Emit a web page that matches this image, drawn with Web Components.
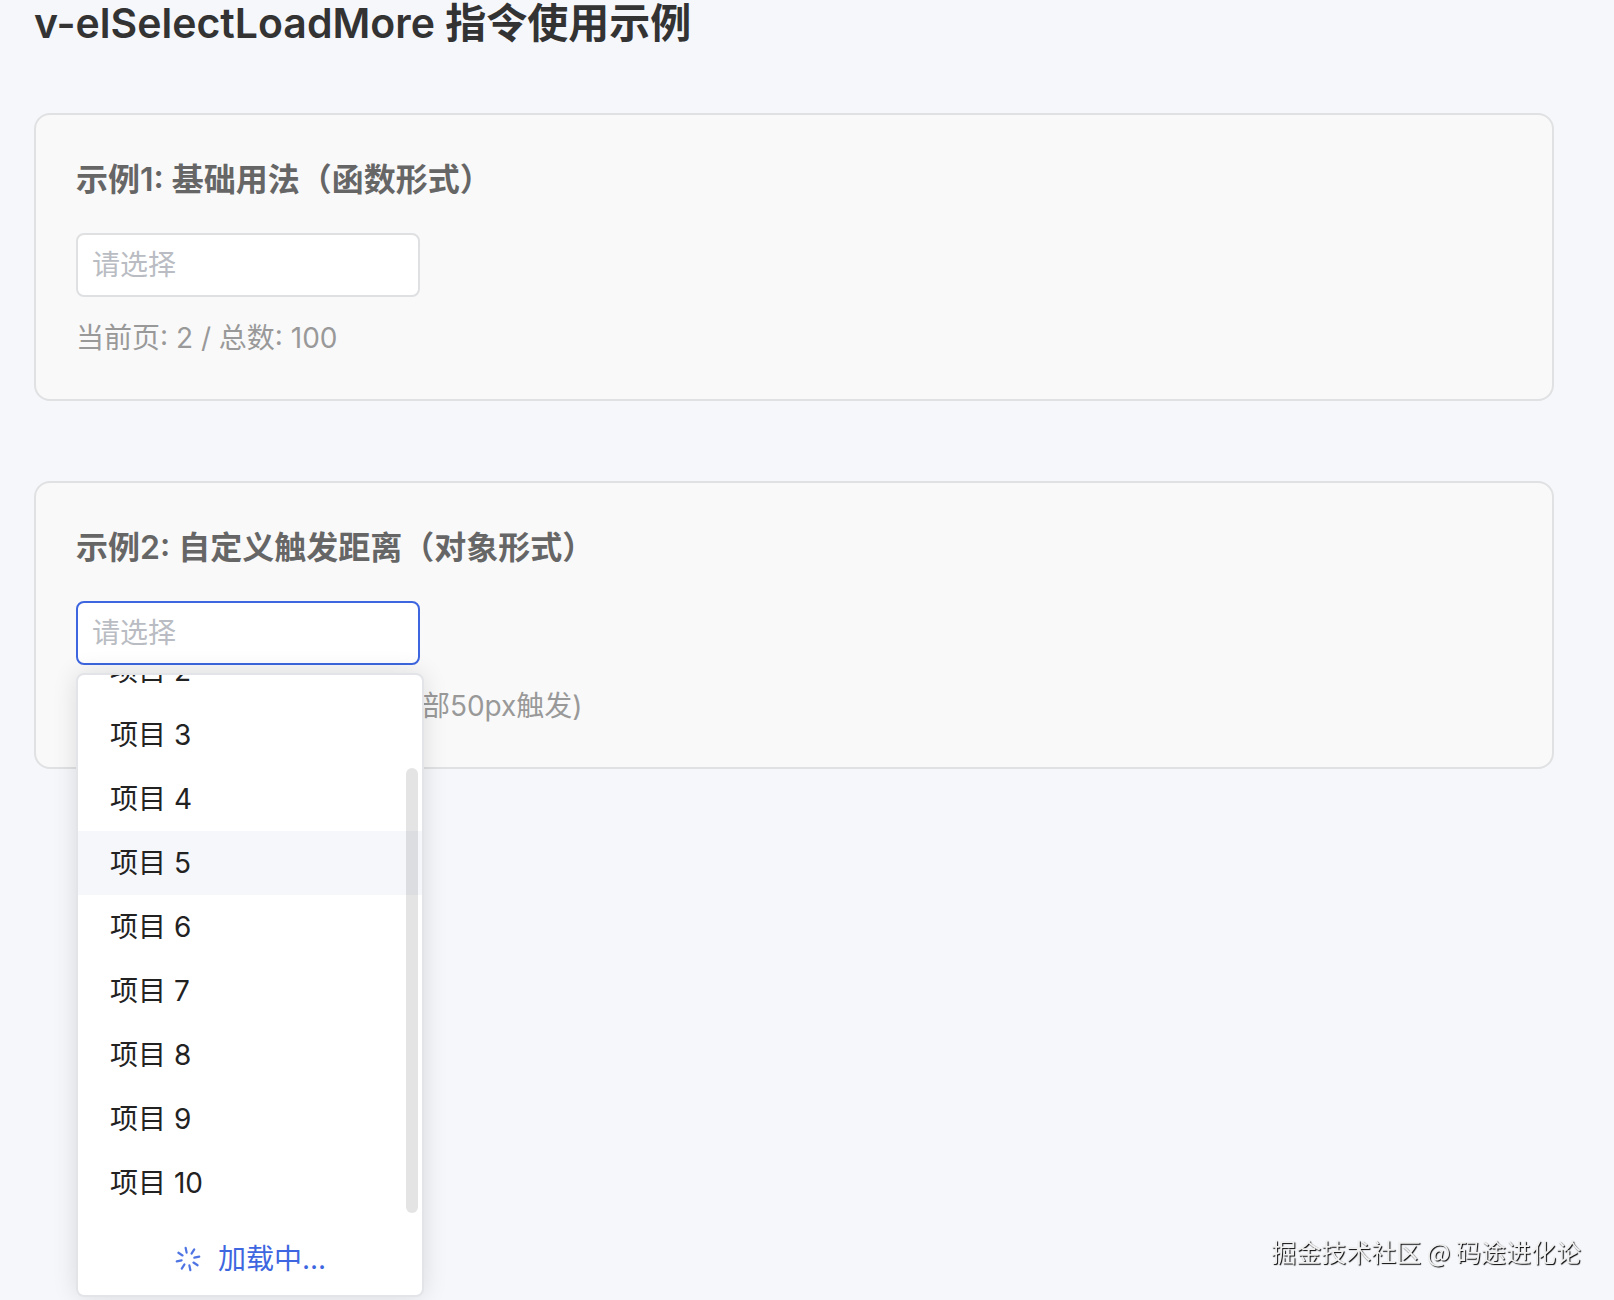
<!DOCTYPE html>
<html lang="zh-CN">
<head>
<meta charset="UTF-8">
<meta name="viewport" content="width=device-width, initial-scale=1">
<title>v-elSelectLoadMore</title>
<style>
    body {
        margin: 0;
        min-height: 100vh;
        background: #f5f7fb;
        color: #333;
        font-family: Inter, "Noto Sans CJK SC", sans-serif;
        font-size: 28px;
    }
</style>
</head>
<body>
<load-more-page></load-more-page>

<script>
class DemoCard extends HTMLElement {
    #template = `
        <style>
            :host {
                display: block;
                padding: 40px;
                border: 2px solid #e0e1e2;
                border-radius: 16px;
                background: #f9f9f9;
            }

            h3 {
                margin: 0 0 28px;
                color: #666;
                font-size: 32px;
                font-weight: 600;
                line-height: 50px;
            }

            p {
                margin: 20px 0 0;
                color: #999;
                line-height: 42px;
            }
        </style>

        <h3><slot name="title"></slot></h3>
        <slot></slot>
        <p><slot name="info"></slot></p>
    `;

    constructor() {
        super();
        this.attachShadow({ mode: 'open' }).innerHTML = this.#template;
    }
}

class LoadMoreSelect extends HTMLElement {
    #template = `
        <style>
            :host {
                display: block;
                position: relative;
                width: 344px;
            }

            select {
                display: block;
                appearance: none;
                box-sizing: border-box;
                width: 100%;
                height: 64px;
                padding: 0 14px;
                border: 2px solid #dfe0e2;
                border-radius: 8px;
                outline: none;
                background: #fff;
                color: #b9bcc2;
                font: inherit;
            }

            :host([open]) select {
                border-color: #3d66e0;
            }

            /* the list floats over whatever comes below the select */
            .dropdown {
                display: none;
                position: absolute;
                top: calc(100% + 8px);
                left: 0;
                z-index: 10;
                box-sizing: border-box;
                width: calc(100% + 4px);
                border: 2px solid #e2e4e8;
                border-radius: 8px;
                background: #fff;
                box-shadow: 0 0 24px rgba(0, 0, 0, .12);
            }

            :host([open]) .dropdown {
                display: block;
            }
        </style>

        <select></select>
        <div class="dropdown"><slot></slot></div>
    `;

    constructor() {
        super();
        this.attachShadow({ mode: 'open' }).innerHTML = this.#template;
    }

    connectedCallback() {
        const select = this.shadowRoot.querySelector('select');
        select.setAttribute('aria-label', this.getAttribute('label'));
        select.add(new Option(this.getAttribute('placeholder'), ''));
    }
}

class OptionList extends HTMLElement {
    #template = `
        <style>
            :host {
                display: flex;
                position: relative;
                flex-direction: column;
                justify-content: flex-end;
                height: 620px;
                overflow: hidden;
                border-radius: 6px;
            }

            ul {
                flex: none;
                margin: 0;
                padding: 0;
                list-style: none;
            }

            li {
                height: 64px;
                padding: 0 32px;
                color: #222;
                line-height: 64px;
            }

            li.hover {
                background: #f5f7fa;
            }

            .thumb {
                position: absolute;
                top: 93px;
                right: 4px;
                width: 12px;
                height: 445px;
                border-radius: 6px;
                background: rgba(120, 122, 126, .2);
            }
        </style>

        <ul role="listbox" aria-label="项目"></ul>
        <slot></slot>
        <div class="thumb"></div>
    `;

    constructor() {
        super();
        this.attachShadow({ mode: 'open' }).innerHTML = this.#template;
    }

    connectedCallback() {
        const list = this.shadowRoot.querySelector('ul');
        const from = Number(this.getAttribute('from'));
        const to = Number(this.getAttribute('to'));
        const hover = Number(this.getAttribute('hover'));

        for (let i = from; i <= to; i++) {
            const item = document.createElement('li');
            item.setAttribute('role', 'option');
            item.textContent = `项目 ${i}`;
            item.classList.toggle('hover', i === hover);
            list.append(item);
        }
    }
}

class LoadingRow extends HTMLElement {
    #template = `
        <style>
            :host {
                display: flex;
                flex: none;
                align-items: center;
                justify-content: center;
                gap: 16px;
                padding: 24px 0 16px;
                color: #3d66e0;
                line-height: 40px;
            }

            svg {
                width: 28px;
                height: 28px;
            }
        </style>

        <svg viewBox="-14 -14 28 28" fill="none" stroke="#4f74e3" stroke-width="2.200" stroke-linecap="round" aria-hidden="true">
            <g transform="rotate(-12)">
                <path d="M0-6.500V-11.500M0 6.500V11.500M-6.500 0H-11.500M6.500 0H11.500"/>
                <path d="M4.600-4.600L8.100-8.100M4.600 4.600L8.100 8.100M-4.600 4.600L-8.100 8.100M-4.600-4.600L-8.100-8.100"/>
            </g>
        </svg>
        <span><slot></slot></span>
    `;

    constructor() {
        super();
        this.attachShadow({ mode: 'open' }).innerHTML = this.#template;
    }
}

class WaterMark extends HTMLElement {
    #template = `
        <style>
            :host {
                display: block;
                position: fixed;
                right: 33px;
                bottom: 31px;
                color: #f0f0f0;
                font-family: "Noto Sans CJK SC", sans-serif;
                font-size: 25px;
                line-height: 36px;
                text-shadow: 1px 1px 1px #000;
            }
        </style>

        <slot></slot>
    `;

    constructor() {
        super();
        this.attachShadow({ mode: 'open' }).innerHTML = this.#template;
    }
}

class LoadMorePage extends HTMLElement {
    #template = `
        <style>
            :host {
                display: block;
                padding: 0 60px 0 34px;
            }

            h2 {
                margin: 0 0 67px;
                font-size: 41px;
                font-weight: 600;
                line-height: 46px;
            }

            main {
                display: flex;
                flex-direction: column;
                gap: 80px;
            }
        </style>

        <h2>v-elSelectLoadMore 指令使用示例</h2>
        <main>
            <demo-card>
                <span slot="title">示例1: 基础用法（函数形式）</span>
                <load-more-select label="基础用法" placeholder="请选择"></load-more-select>
                <span slot="info">当前页: 2 / 总数: 100</span>
            </demo-card>
            <demo-card>
                <span slot="title">示例2: 自定义触发距离（对象形式）</span>
                <load-more-select label="自定义触发距离" placeholder="请选择" open>
                    <option-list from="2" to="10" hover="5">
                        <loading-row>加载中...</loading-row>
                    </option-list>
                </load-more-select>
                <span slot="info">当前页: 1 / 总数: 50 (距离底部50px触发)</span>
            </demo-card>
        </main>
        <water-mark>掘金技术社区 @ 码途进化论</water-mark>
    `;

    constructor() {
        super();
        this.attachShadow({ mode: 'open' }).innerHTML = this.#template;
    }
}

window.customElements.define('demo-card', DemoCard);
window.customElements.define('load-more-select', LoadMoreSelect);
window.customElements.define('option-list', OptionList);
window.customElements.define('loading-row', LoadingRow);
window.customElements.define('water-mark', WaterMark);
window.customElements.define('load-more-page', LoadMorePage);
</script>
</body>
</html>
